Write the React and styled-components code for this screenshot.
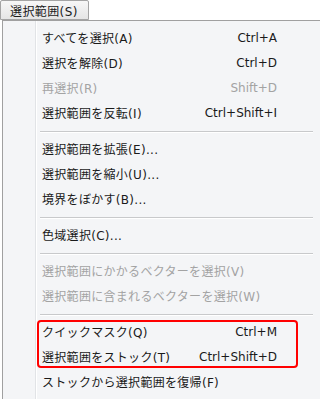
import styled, { createGlobalStyle } from "styled-components";

const menu_items = [
  [
    { label: "すべてを選択(A)", shortcut: "Ctrl+A" },
    { label: "選択を解除(D)", shortcut: "Ctrl+D" },
    { label: "再選択(R)", shortcut: "Shift+D", disabled: true },
    { label: "選択範囲を反転(I)", shortcut: "Ctrl+Shift+I" },
  ],
  [
    { label: "選択範囲を拡張(E)..." },
    { label: "選択範囲を縮小(U)..." },
    { label: "境界をぼかす(B)..." },
  ],
  [{ label: "色域選択(C)..." }],
  [
    { label: "選択範囲にかかるベクターを選択(V)", disabled: true },
    { label: "選択範囲に含まれるベクターを選択(W)", disabled: true },
  ],
];

const stock_items = [
  { label: "クイックマスク(Q)", shortcut: "Ctrl+M" },
  { label: "選択範囲をストック(T)", shortcut: "Ctrl+Shift+D" },
];

const GlobalStyle = createGlobalStyle`
  body {
    margin: 0;
    background: #fff;
    overflow: hidden;
    font-family: "DejaVu Sans", "Noto Sans CJK JP", sans-serif;
    font-size: 12px;
    color: #1a1a1a;
  }
`;

const MenuBar = styled.div`
  display: flex;
  height: 20px;
`;

const MenuTitle = styled.div`
  width: 89px;
  height: 20px;
  box-sizing: border-box;
  padding-left: 9px;
  display: flex;
  align-items: center;
  letter-spacing: 0.4px;
  border: 1px solid #a4a4a4;
  border-radius: 2px 2px 0 0;
  background: linear-gradient(#f7f7f7, #e5e5e5);
`;

const Panel = styled.div`
  position: relative;
  width: 330px;
  margin-left: 2px;
  padding: 4px 0 5px;
  border: 1px solid #a0a0a0;
  background: #f4f5f7;
  &::before {
    content: "";
    position: absolute;
    top: 0;
    bottom: 0;
    left: 32px;
    width: 1px;
    background: #e1e3e6;
    box-shadow: 1px 0 0 #fff;
  }
`;

const Item = styled.div`
  position: relative;
  display: flex;
  justify-content: space-between;
  align-items: center;
  height: 25px;
  padding: 0 56px 0 39px;
  white-space: nowrap;
  color: ${({ $disabled }) => ($disabled ? "#a3a3a3" : "#1a1a1a")};
`;

const Label = styled.span`
  letter-spacing: 0.3px;
`;

const Separator = styled.div`
  height: 1px;
  margin: 6px 20px 4px 37px;
  background: #c8c9cb;
  box-shadow: 0 1px 0 #fff;
`;

const Highlight = styled.div`
  position: relative;
  &::after {
    content: "";
    position: absolute;
    top: 1px;
    left: 34px;
    width: 261px;
    height: 48px;
    box-sizing: border-box;
    border: 2px solid #ff0000;
    border-radius: 4px;
  }
`;

const MenuItem = ({ label, shortcut, disabled }) => (
  <Item $disabled={disabled}>
    <Label>{label}</Label>
    {shortcut && <span>{shortcut}</span>}
  </Item>
);

export default function App() {
  return (
    <>
      <GlobalStyle />
      <MenuBar>
        <MenuTitle>選択範囲(S)</MenuTitle>
      </MenuBar>
      <Panel>
        {menu_items.map((group, i) => (
          <div key={i}>
            {group.map((item) => (
              <MenuItem key={item.label} {...item} />
            ))}
            <Separator />
          </div>
        ))}
        <Highlight>
          {stock_items.map((item) => (
            <MenuItem key={item.label} {...item} />
          ))}
        </Highlight>
        <MenuItem label="ストックから選択範囲を復帰(F)" />
      </Panel>
    </>
  );
}
